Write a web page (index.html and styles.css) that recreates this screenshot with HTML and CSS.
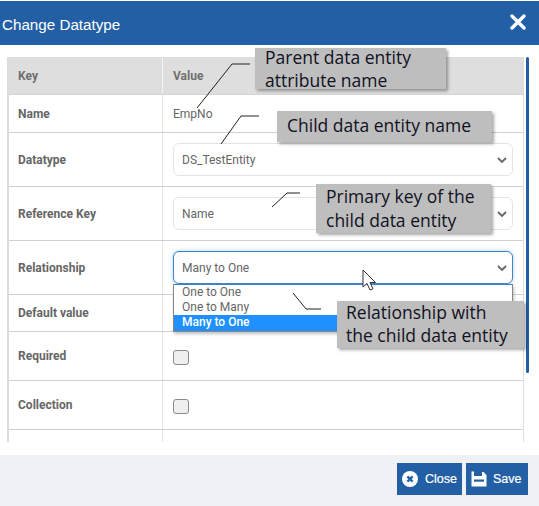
FILE: index.html
```html
<!DOCTYPE html>
<html lang="en">
<head>
<meta charset="utf-8">
<title>Change Datatype</title>
<link rel="stylesheet" href="styles.css">
</head>
<body>
<div class="modal">
  <header class="head">
    <h1 class="title">Change Datatype</h1>
    <svg class="close-x" viewBox="0 0 16 16" width="16" height="16"><path d="M2 2 14 14M14 2 2 14" stroke="#fff" stroke-width="3.4" stroke-linecap="round"/></svg>
  </header>
  <main class="body">
    <div class="table">
      <div class="row row-head"><div class="key">Key</div><div class="val">Value</div></div>
      <div class="row r38"><div class="key">Name</div><div class="val">EmpNo</div></div>
      <div class="row r54"><div class="key">Datatype</div><div class="val"><div class="select">DS_TestEntity<svg class="chev" viewBox="0 0 10 6" width="10" height="6"><path d="M1 1 5 5 9 1" fill="none" stroke="#666" stroke-width="1.8"/></svg></div></div></div>
      <div class="row r54"><div class="key">Reference Key</div><div class="val"><div class="select">Name<svg class="chev" viewBox="0 0 10 6" width="10" height="6"><path d="M1 1 5 5 9 1" fill="none" stroke="#666" stroke-width="1.8"/></svg></div></div></div>
      <div class="row r54"><div class="key">Relationship</div><div class="val"><div class="select focus">Many to One<svg class="chev" viewBox="0 0 10 6" width="10" height="6"><path d="M1 1 5 5 9 1" fill="none" stroke="#666" stroke-width="1.8"/></svg></div></div></div>
      <div class="row r37"><div class="key">Default value</div><div class="val"></div></div>
      <div class="row r49"><div class="key">Required</div><div class="val"><span class="check"></span></div></div>
      <div class="row r49"><div class="key">Collection</div><div class="val"><span class="check"></span></div></div>
      <div class="row r20"><div class="key"></div><div class="val"></div></div>
    </div>
    <div class="scrollbar"></div>
  </main>
  <footer class="foot">
    <button class="btn btn-close"><svg viewBox="0 0 16 16" width="16" height="16"><circle cx="8" cy="8" r="8" fill="#fff"/><path d="M5.4 5.4 10.6 10.6M10.6 5.4 5.4 10.6" stroke="#235fa5" stroke-width="2.2"/></svg>Close</button>
    <button class="btn btn-save"><svg viewBox="0 0 16 16" width="16" height="16"><path d="M0.500 0.500H3V5H11V1H12.500L15.500 4V15.500H0.500Z" fill="#fff"/><rect x="3" y="8.500" width="10" height="2.200" fill="#235fa5"/></svg>Save</button>
  </footer>
</div>

<div class="menu">
  <div class="opt">One to One</div>
  <div class="opt">One to Many</div>
  <div class="opt sel">Many to One</div>
</div>

<svg class="lines" viewBox="0 0 539 506" width="539" height="506">
  <g fill="none" stroke="#222" stroke-width="1">
    <path d="M197 108 232 64H250"/>
    <path d="M221 144 241 116H259"/>
    <path d="M272 207 287 193H300"/>
    <path d="M293 293 306 309H321"/>
  </g>
  <path d="M363 270V287L367 283.500 370 290 373 288.800 370 282.500H375.500Z" fill="#fff" stroke="#333" stroke-width="1"/>
</svg>

<div class="note n1">Parent data entity<br>attribute name</div>
<div class="note n2">Child data entity name</div>
<div class="note n3">Primary key of the<br>child data entity</div>
<div class="note n4">Relationship with<br>the child data entity</div>
</body>
</html>
```
FILE: styles.css
```css
* { box-sizing: border-box; }
html, body { margin: 0; padding: 0; }
body { width: 539px; height: 506px; overflow: hidden; background: #fff; position: relative; font-family: "Roboto", "Liberation Sans", sans-serif; color: #666; }
.modal { display: flex; flex-direction: column; height: 506px; padding-top: 1px; }
.head { height: 44px; background: #235fa5; display: flex; align-items: center; justify-content: space-between; padding: 0 13px 0 2px; flex: none; }
.title { margin: 2px 0 0; font: 400 15.200px "Liberation Sans", Arial, sans-serif; color: #fff; }
.close-x { margin-top: -2px; }
.body { flex: 1; display: flex; align-items: flex-start; padding: 12px 0 0 7px; overflow: hidden; }
.table { width: 517px; height: 385px; overflow: hidden; border-left: 2px solid #ddd; border-right: 1px solid #ddd; flex: none; }
.row { display: grid; grid-template-columns: 153px 1fr; border-bottom: 1px solid #d0d0d0; font-size: 12px; }
.row-head { height: 38px; background: #dedede; border-bottom-color: #d4d4d4; }
.row-head .key, .row-head .val { font-weight: 700; color: #707070; }
.row-head .val { border-left-color: #f2f2f2; }
.r38 { height: 38px; }
.r54 { height: 54px; }
.r37 { height: 37px; }
.r49 { height: 49px; }
.r20 { height: 20px; border-bottom: 0; }
.key { padding-left: 9px; display: flex; align-items: center; font-weight: 700; color: #666; }
.val { padding: 0 10px; display: flex; align-items: center; border-left: 1px solid #e6e6e6; color: #666; }
.select { width: 340px; height: 33px; border: 1px solid #e4e4e4; border-radius: 6px; padding: 0 5px 0 8px; display: flex; align-items: center; justify-content: space-between; background: #fff; color: #666; }
.select.focus { border-color: #3f83c8; box-shadow: 0 0 4px rgba(80, 150, 230, .45); }
.check { width: 16px; height: 15px; border: 1px solid #8a8a8a; border-radius: 3px; background: #efefef; display: block; margin-top: 3px; }
.scrollbar { width: 3px; height: 316px; margin-left: 2px; background: #235fa5; border-radius: 2px; flex: none; }
.foot { height: 51px; flex: none; background: #eff1f6; display: flex; justify-content: flex-end; align-items: flex-start; gap: 4px; padding: 8px 11px 0 0; }
.btn { height: 32px; background: #235fa5; color: #fff; border: 0; display: flex; align-items: center; font: 400 12.500px "Liberation Sans", Arial, sans-serif; -webkit-text-stroke: .2px #fff; }
.btn-close { width: 65px; padding: 0 0 0 5px; gap: 7px; }
.btn-save { width: 62px; padding: 0 0 0 5px; gap: 6px; }
.menu { position: absolute; left: 173px; top: 284px; width: 340px; background: #fff; border: 1px solid #888; border-top-color: #3f83c8; box-shadow: 1px 2px 3px rgba(0, 0, 0, .25); font-size: 12px; color: #666; }
.opt { height: 15px; line-height: 15px; padding-left: 8px; }
.opt.sel { background: #1e90ff; color: #fff; height: 16px; font-weight: 500; }
.lines { position: absolute; left: 0; top: 0; }
.note { position: absolute; background: #bebebe; color: #111122; font: 400 17.500px/23px "Open Sans", sans-serif; padding: 0 10px; box-shadow: 2px 2px 3px rgba(0, 0, 0, .35); white-space: nowrap; }
.note::before { content: ""; display: block; margin-top: -2px; }
.n1 { left: 255px; top: 48px; width: 191px; height: 41px; }
.n2 { left: 277px; top: 111px; width: 215px; height: 31px; line-height: 32px; }
.n3 { left: 316px; top: 184px; width: 175px; height: 49px; line-height: 24px; }
.n3::before { margin-top: 0; }
.n4 { left: 337px; top: 301px; width: 187px; height: 47px; padding-left: 9px; }
.n4::before { margin-top: 0; }
```
